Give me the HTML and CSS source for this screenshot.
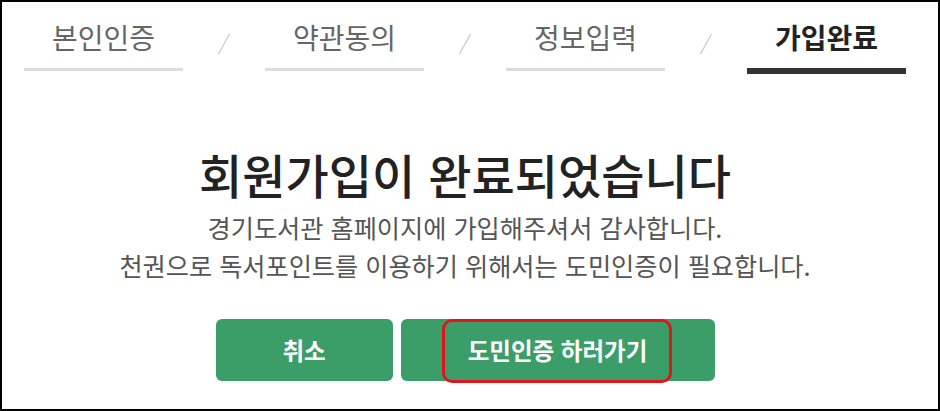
FILE: index.html
```html
<!DOCTYPE html>
<html lang="ko">
<head>
<meta charset="utf-8">
<title>회원가입 완료</title>
<link rel="stylesheet" href="styles.css">
</head>
<body>
<div class="frame">
  <nav class="steps">
    <div class="step">본인인증</div>
    <div class="sep"><svg width="14" height="22" viewBox="0 0 14 22"><line x1="1.5" y1="21" x2="12.5" y2="1" stroke="#c9c9c9" stroke-width="1.3"/></svg></div>
    <div class="step">약관동의</div>
    <div class="sep"><svg width="14" height="22" viewBox="0 0 14 22"><line x1="1.5" y1="21" x2="12.5" y2="1" stroke="#c9c9c9" stroke-width="1.3"/></svg></div>
    <div class="step">정보입력</div>
    <div class="sep"><svg width="14" height="22" viewBox="0 0 14 22"><line x1="1.5" y1="21" x2="12.5" y2="1" stroke="#c9c9c9" stroke-width="1.3"/></svg></div>
    <div class="step active">가입완료</div>
  </nav>
  <main class="content">
    <h1 class="title">회원가입이 완료되었습니다</h1>
    <p class="desc">경기도서관 홈페이지에 가입해주셔서 감사합니다.<br>천권으로 독서포인트를 이용하기 위해서는 도민인증이 필요합니다.</p>
    <div class="actions">
      <button class="btn btn-cancel" type="button">취소</button>
      <button class="btn btn-go" type="button">도민인증 하러가기<span class="highlight"></span></button>
    </div>
  </main>
</div>
</body>
</html>
```

FILE: styles.css
```css
* { box-sizing: border-box; }
html, body { margin: 0; padding: 0; background: #fff; }
body { font-family: "Noto Sans CJK KR", "Noto Sans", sans-serif; }

.frame {
  width: 940px;
  height: 411px;
  border: 2px solid #000;
  background: #fff;
  overflow: hidden;
}

.steps {
  display: flex;
  align-items: flex-start;
  padding-left: 22px;
}
.step {
  width: 159px;
  height: 69px;
  padding-top: 17px;
  font-size: 28px;
  line-height: 36px;
  color: #666;
  text-align: center;
  border-bottom: 3px solid #dcdcdc;
}
.step.active {
  height: 72px;
  color: #222;
  font-weight: 700;
  border-bottom: 6px solid #333;
}
.sep {
  width: 82px;
  height: 67px;
  display: flex;
  justify-content: center;
  padding-top: 31px;
}

.content {
  padding: 73px 10px 0 0;
  text-align: center;
}
.title {
  margin: 0;
  font-size: 47px;
  line-height: 53px;
  font-weight: 500;
  color: #222;
}
.desc {
  margin: 8px 0 0;
  font-size: 25.2px;
  line-height: 38px;
  color: #555;
}
.actions {
  margin-top: 35px;
  display: flex;
  justify-content: center;
  gap: 8px;
}
.btn {
  position: relative;
  height: 62px;
  border: 0;
  border-radius: 6px;
  background: #3b9d68;
  color: #fff;
  font-family: inherit;
  font-size: 23.5px;
  font-weight: 700;
  padding: 0;
}
.btn-cancel { width: 177px; }
.btn-go { width: 314px; }
.highlight {
  position: absolute;
  left: 41px;
  top: 0;
  width: 230px;
  height: 64px;
  border: 3px solid #e0161c;
  border-radius: 10px;
}
```
